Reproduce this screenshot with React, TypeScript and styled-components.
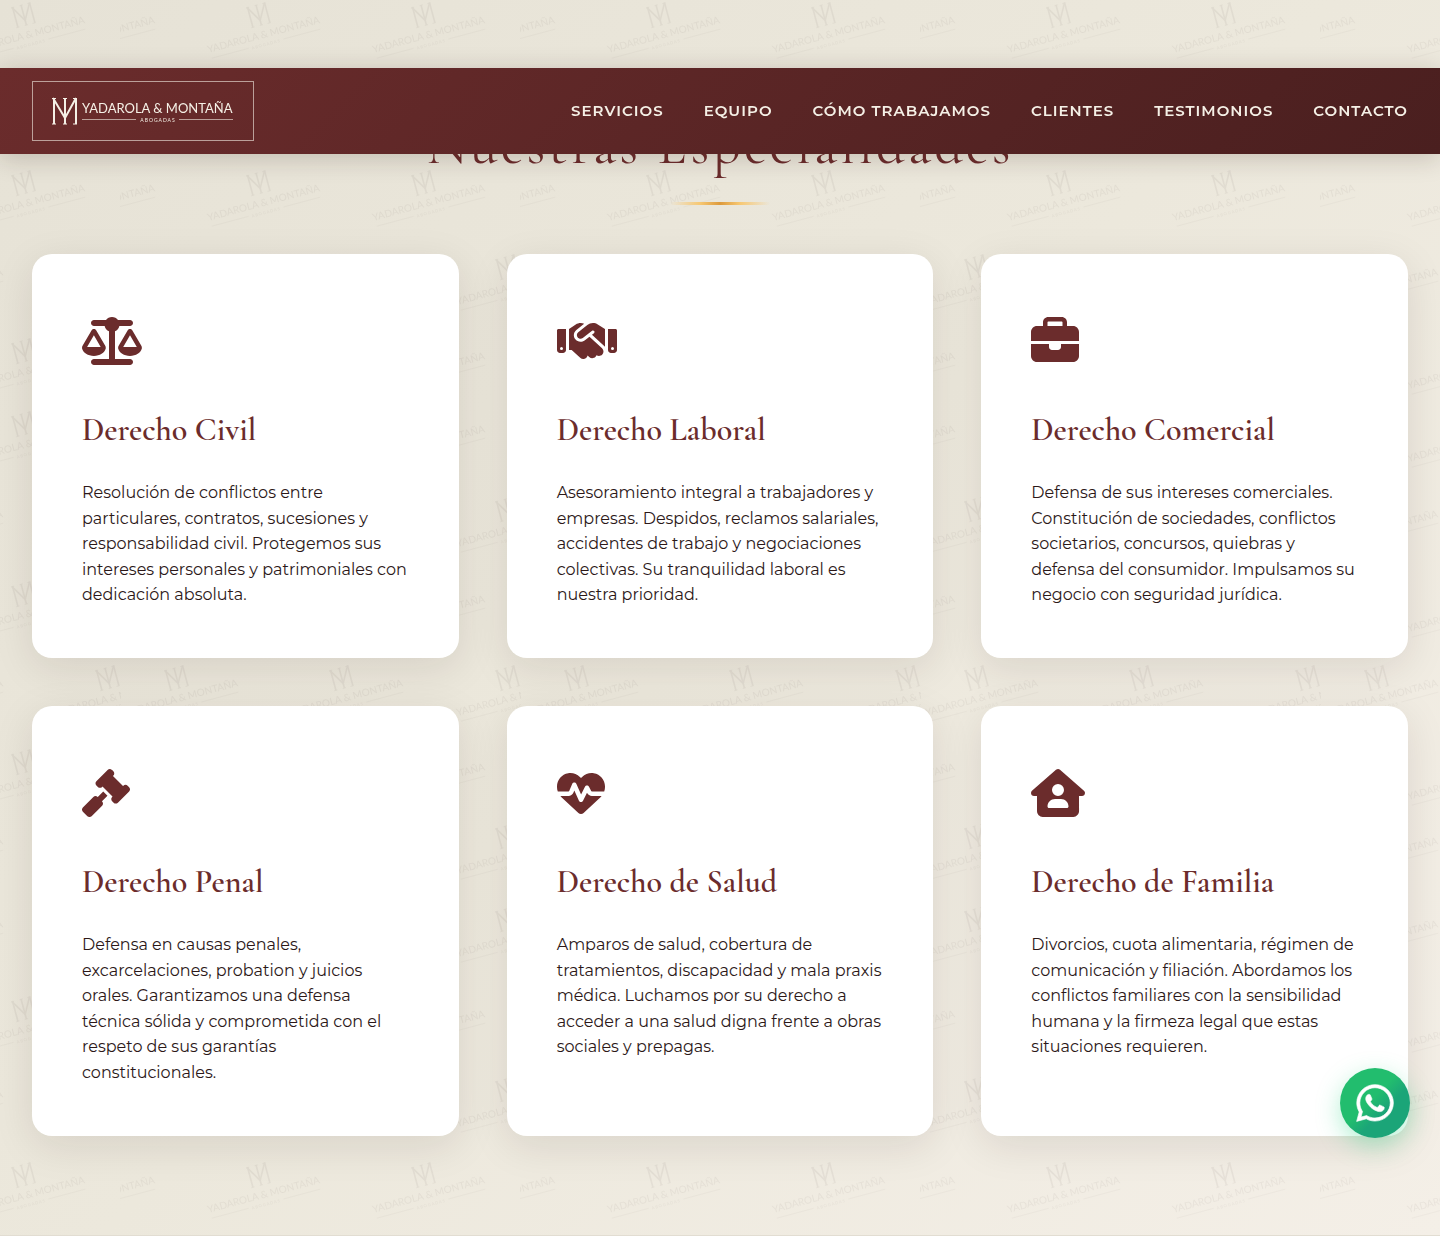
import React from "react";
import styled, { createGlobalStyle } from "styled-components";
import type { IconType } from "react-icons";
import {
  FaScaleBalanced,
  FaHandshake,
  FaBriefcase,
  FaGavel,
  FaHeartPulse,
  FaHouseUser,
  FaWhatsapp,
} from "react-icons/fa6";

const color = {
  wine: "#6b2c2c",
  wineDark: "#4a1f1f",
  cream: "#f5f0e6",
  ink: "#2c1818",
};

const sans = `Montserrat, Inter, "Open Sans", sans-serif`;
const serif = `"Cormorant Garamond", "Liberation Serif", serif`;

const GlobalStyle = createGlobalStyle`
  *, *::before, *::after { box-sizing: border-box; }
  body {
    margin: 0;
    font-family: ${sans};
    color: ${color.ink};
    background: #f3eee5;
  }
`;

const Header = styled.header`
  position: fixed;
  top: 68px;
  left: 0;
  right: 0;
  z-index: 10;
  display: flex;
  align-items: center;
  justify-content: space-between;
  padding: 13px 32px;
  background: linear-gradient(135deg, ${color.wine}, ${color.wineDark});
  box-shadow: 0 4px 24px rgba(44, 24, 16, 0.2);
`;

const LogoLink = styled.a`
  display: flex;
  border: 1px solid rgba(245, 240, 230, 0.6);
  color: ${color.cream};
`;

const Nav = styled.nav`
  display: flex;
  gap: 40px;
`;

const NavLink = styled.a`
  color: ${color.cream};
  font-size: 15px;
  font-weight: 600;
  line-height: 24px;
  letter-spacing: 1px;
  text-transform: uppercase;
  text-decoration: none;
`;

const Section = styled.section`
  position: relative;
  padding: 112px 32px 99px;
  border-bottom: 1px solid #e2ddd2;
  background: linear-gradient(135deg, #e6e2d6, #ece8dc 50%, #f4efe7);
`;

const Watermark = styled.svg`
  position: absolute;
  inset: 0;
  width: 100%;
  height: 100%;
  color: ${color.ink};
  opacity: 0.05;
`;

const Title = styled.h2`
  position: relative;
  margin: 0;
  color: ${color.wine};
  font-family: ${serif};
  font-size: 56px;
  font-weight: 400;
  line-height: 66px;
  letter-spacing: 3px;
  text-align: center;
`;

const Rule = styled.div`
  position: relative;
  width: 100px;
  height: 3px;
  margin: 24px auto 49px;
  background: linear-gradient(90deg, transparent, #f7c873 30%, #dd9a3c 50%, #f7c873 70%, transparent);
`;

const Grid = styled.div`
  position: relative;
  display: grid;
  grid-template-columns: repeat(3, 1fr);
  gap: 48px;
`;

const Card = styled.article`
  padding: 50px;
  border-radius: 20px;
  background: #fff;
  box-shadow: 0 10px 40px rgba(44, 24, 16, 0.1);
`;

const CardIcon = styled.div<{ $width: number }>`
  display: flex;
  align-items: center;
  height: 76px;
  margin-bottom: 24px;
  padding-bottom: 2px;
  color: ${color.wine};

  svg {
    width: ${({ $width }) => $width}px;
    height: 48px;
  }
`;

const CardTitle = styled.h3`
  margin: 0 0 24px;
  color: ${color.wine};
  font-family: ${serif};
  font-size: 32px;
  font-weight: 600;
  line-height: 52px;
`;

const CardText = styled.p`
  margin: 0;
  font-size: 16px;
  line-height: 1.6;
`;

const WhatsappLink = styled.a`
  position: fixed;
  right: 30px;
  bottom: 98px;
  z-index: 20;
  display: grid;
  place-items: center;
  width: 70px;
  height: 70px;
  border-radius: 50%;
  background: linear-gradient(135deg, #22bd6e 45%, #1ba578 62%);
  box-shadow: 0 8px 24px rgba(37, 211, 130, 0.35);
  color: #fff;

  svg {
    width: 42px;
    height: 42px;
    stroke: currentColor;
    stroke-width: 8px;
  }
`;

const Monogram = () => (
  <g fill="none" stroke="currentColor">
    <path d="M2 0v26M13 0v26M24 0v26" strokeWidth="2" />
    <path d="M1 0 13 20 24 0" strokeWidth="2" />
    <path d="M0 .5h4M11 .5h4M21 .5h4M0 26h4M11 26h4M21 26h4" />
  </g>
);

const Logo = () => (
  <svg width="220" height="58" viewBox="0 0 220 58" role="img" aria-label="Yadarola & Montaña Abogadas">
    <g transform="translate(19 16)">
      <Monogram />
    </g>
    <g fill="currentColor" fontFamily="Lato, sans-serif">
      <text x="49" y="31" fontSize="13">YADAROLA &amp; MONTAÑA</text>
      <text x="125" y="40" fontSize="5" letterSpacing="1" textAnchor="middle">ABOGADAS</text>
    </g>
    <path d="M49 37.500h54M146 37.500h54" stroke="currentColor" opacity=".6" />
  </svg>
);

const Stamp = ({ x, y, clip }: { x: number; y: number; clip?: string }) => (
  <g clipPath={clip && `url(#${clip})`}>
    <g transform={`translate(${x} ${y}) rotate(-15)`}>
      <g transform="translate(-9 -9) scale(.8)">
        <Monogram />
      </g>
      <g fill="currentColor" fontFamily="Lato, sans-serif" textAnchor="middle">
        <text x="1" y="25" fontSize="10">YADAROLA &amp; MONTAÑA</text>
        <text x="1" y="33" fontSize="4" letterSpacing="1">ABOGADAS</text>
      </g>
      <path d="M-55 31h38M19 31h38" stroke="currentColor" strokeWidth=".5" />
    </g>
  </g>
);

const evenRows = [14, 98, 182, 350, 423, 593, 761, 1008, 1174];
const oddRows = [266, 508, 677, 835, 918, 1088];

const Pattern = () => (
  <Watermark aria-hidden="true">
    <defs>
      <clipPath id="cut-left">
        <rect x="120" width="280" height="1240" />
      </clipPath>
      <clipPath id="cut-right">
        <rect width="121" height="1240" />
      </clipPath>
      <pattern id="stamps" width="400" height="1240" patternUnits="userSpaceOnUse">
        {evenRows.map((y) => (
          <g key={y}>
            <Stamp x={22} y={y} />
            <Stamp x={92} y={y} clip="cut-left" />
            <Stamp x={257} y={y} />
            <Stamp x={422} y={y} />
          </g>
        ))}
        {oddRows.map((y) => (
          <g key={y}>
            <Stamp x={-60} y={y} />
            <Stamp x={106} y={y} clip="cut-right" />
            <Stamp x={175} y={y} />
            <Stamp x={340} y={y} />
          </g>
        ))}
      </pattern>
    </defs>
    <rect width="100%" height="100%" fill="url(#stamps)" />
  </Watermark>
);

const links = ["Servicios", "Equipo", "Cómo trabajamos", "Clientes", "Testimonios", "Contacto"];

const services: { icon: IconType; iconWidth: number; title: string; text: string }[] = [
  {
    icon: FaScaleBalanced,
    iconWidth: 60,
    title: "Derecho Civil",
    text: "Resolución de conflictos entre particulares, contratos, sucesiones y responsabilidad civil. Protegemos sus intereses personales y patrimoniales con dedicación absoluta.",
  },
  {
    icon: FaHandshake,
    iconWidth: 60,
    title: "Derecho Laboral",
    text: "Asesoramiento integral a trabajadores y empresas. Despidos, reclamos salariales, accidentes de trabajo y negociaciones colectivas. Su tranquilidad laboral es nuestra prioridad.",
  },
  {
    icon: FaBriefcase,
    iconWidth: 48,
    title: "Derecho Comercial",
    text: "Defensa de sus intereses comerciales. Constitución de sociedades, conflictos societarios, concursos, quiebras y defensa del consumidor. Impulsamos su negocio con seguridad jurídica.",
  },
  {
    icon: FaGavel,
    iconWidth: 48,
    title: "Derecho Penal",
    text: "Defensa en causas penales, excarcelaciones, probation y juicios orales. Garantizamos una defensa técnica sólida y comprometida con el respeto de sus garantías constitucionales.",
  },
  {
    icon: FaHeartPulse,
    iconWidth: 48,
    title: "Derecho de Salud",
    text: "Amparos de salud, cobertura de tratamientos, discapacidad y mala praxis médica. Luchamos por su derecho a acceder a una salud digna frente a obras sociales y prepagas.",
  },
  {
    icon: FaHouseUser,
    iconWidth: 54,
    title: "Derecho de Familia",
    text: "Divorcios, cuota alimentaria, régimen de comunicación y filiación. Abordamos los conflictos familiares con la sensibilidad humana y la firmeza legal que estas situaciones requieren.",
  },
];

export default function App() {
  return (
    <>
      <GlobalStyle />
      <Header>
        <LogoLink href="#inicio">
          <Logo />
        </LogoLink>
        <Nav>
          {links.map((label) => (
            <NavLink key={label} href={`#${label.toLowerCase().replace(" ", "-")}`}>
              {label}
            </NavLink>
          ))}
        </Nav>
      </Header>
      <main>
        <Section id="servicios">
          <Pattern />
          <Title>Nuestras Especialidades</Title>
          <Rule />
          <Grid>
            {services.map(({ icon: Icon, iconWidth, title, text }) => (
              <Card key={title}>
                <CardIcon $width={iconWidth}>
                  <Icon />
                </CardIcon>
                <CardTitle>{title}</CardTitle>
                <CardText>{text}</CardText>
              </Card>
            ))}
          </Grid>
        </Section>
      </main>
      <WhatsappLink href="#whatsapp" aria-label="Escribir por WhatsApp">
        <FaWhatsapp />
      </WhatsappLink>
    </>
  );
}
